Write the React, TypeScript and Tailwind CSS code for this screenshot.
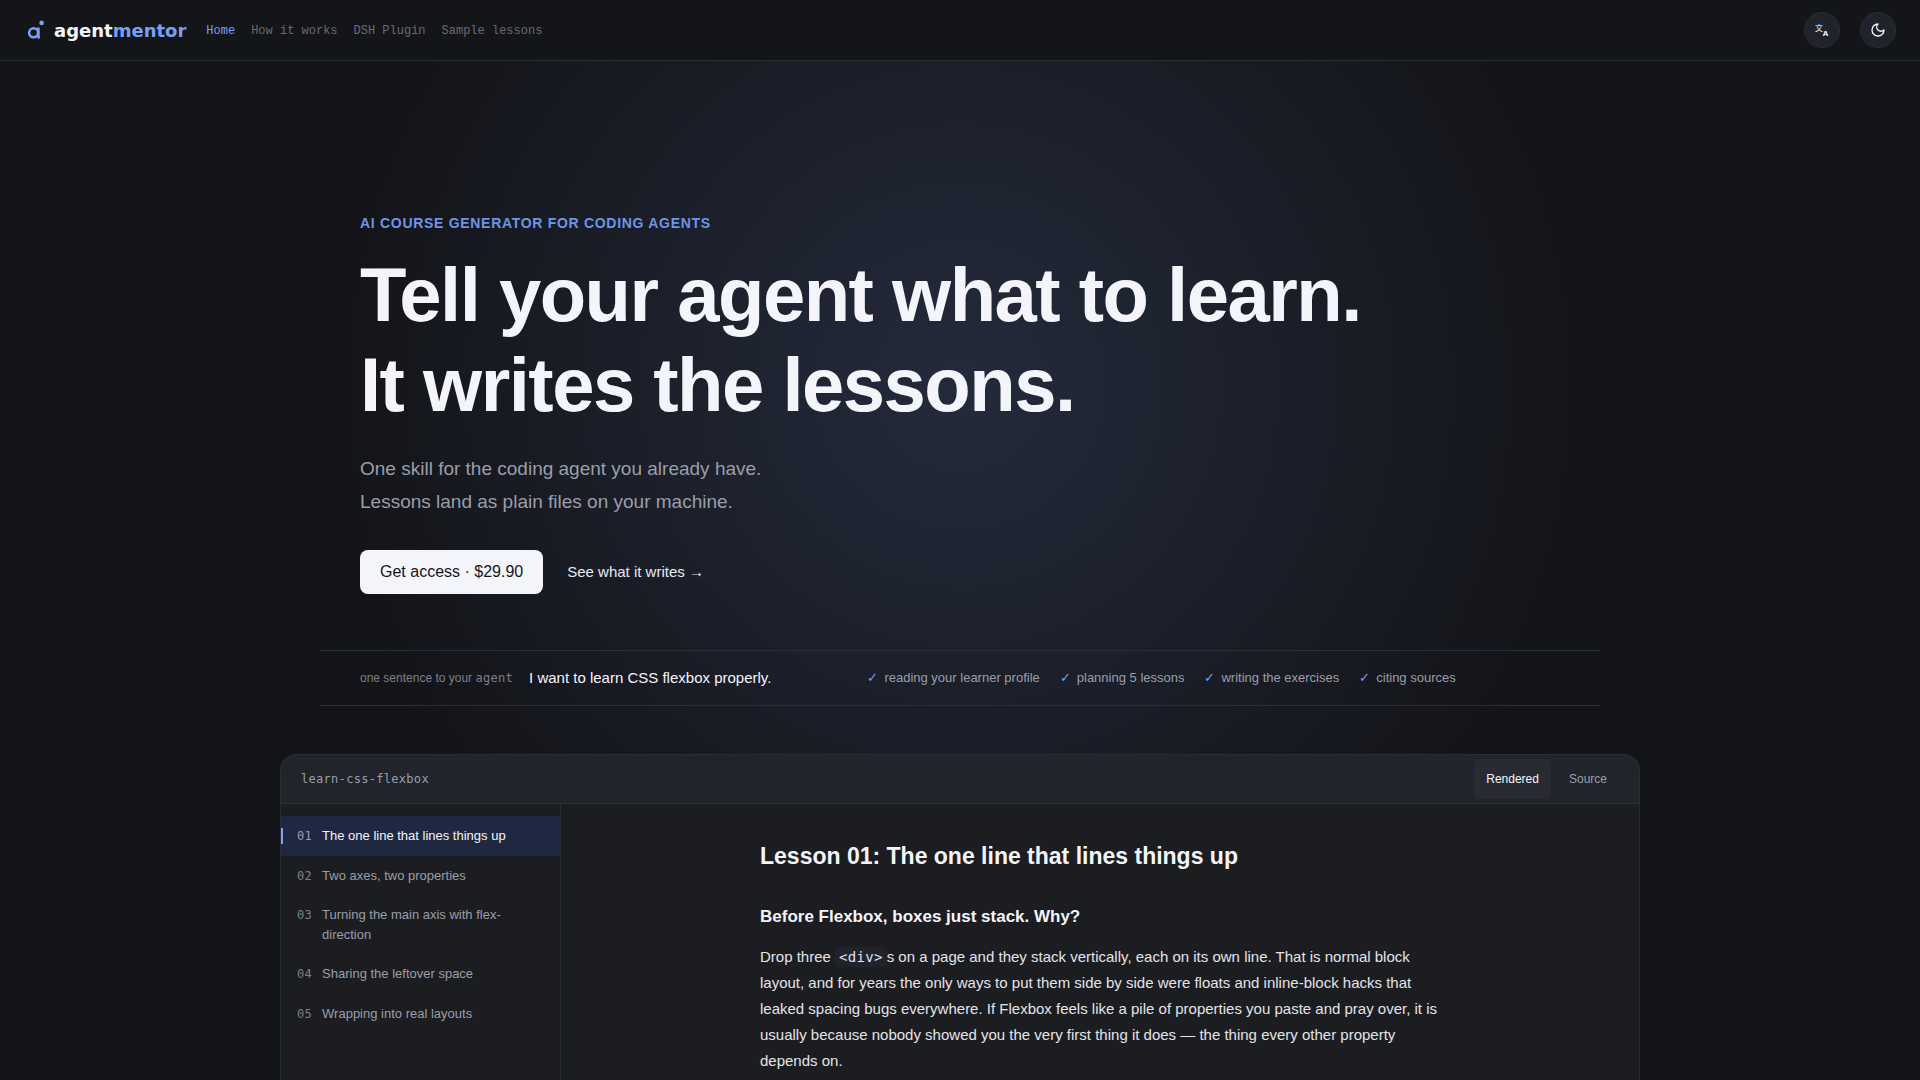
import { useState } from 'react';

const navLinks = ['Home', 'How it works', 'DSH Plugin', 'Sample lessons'];

const steps = ['reading your learner profile', 'planning 5 lessons', 'writing the exercises', 'citing sources'];

const lessons = [
  'The one line that lines things up',
  'Two axes, two properties',
  'Turning the main axis with flex-direction',
  'Sharing the leftover space',
  'Wrapping into real layouts',
];

function LogoMark() {
  return (
    <svg viewBox="0 0 20 20" className="size-5" fill="none" stroke="#7a9ff5" aria-hidden="true">
      <circle cx="9.6" cy="12.8" r="4.5" strokeWidth="2.6" />
      <path d="M14.4 7.4V16c0 1 .3 1.700 1 2.400" strokeWidth="2.600" />
      <circle cx="17.6" cy="2.9" r="2.3" fill="#7a9ff5" stroke="none" />
    </svg>
  );
}

function TranslateIcon() {
  return (
    <svg viewBox="0 0 16 16" className="size-4" fill="currentColor" aria-hidden="true">
      <text x="1" y="8.5" fontSize="8" fontFamily="Noto Sans CJK SC, sans-serif">文</text>
      <text x="8.8" y="14.4" fontSize="7" fontWeight="700" fontFamily="DejaVu Sans, sans-serif">A</text>
    </svg>
  );
}

function MoonIcon() {
  return (
    <svg viewBox="0 0 24 24" className="size-4" fill="none" stroke="currentColor" strokeWidth="2" strokeLinecap="round" strokeLinejoin="round" aria-hidden="true">
      <path d="M12 3a6 6 0 0 0 9 9 9 9 0 1 1-9-9Z" />
    </svg>
  );
}

function Header() {
  return (
    <header className="flex h-[61px] items-center border-b border-[#2a2d33] bg-[#141519] px-6">
      <a href="#" className="flex items-center gap-2.5 font-['DejaVu_Sans',sans-serif] text-[18px] font-bold text-[#f4f5fa]">
        <LogoMark />
        <span>
          agent<span className="text-[#7a9ff5]">mentor</span>
        </span>
      </a>
      <nav className="ml-5 flex gap-4 pt-0.5 font-['Liberation_Mono',monospace] text-xs">
        {navLinks.map((label, i) => (
          <a key={label} href="#" className={i === 0 ? 'text-[#7a9ff5]' : 'text-[#666b76]'}>
            {label}
          </a>
        ))}
      </nav>
      <div className="ml-auto flex gap-5 text-[#f4f5fa]">
        <button type="button" aria-label="Change language" className="flex size-9 items-center justify-center rounded-full border border-[#2a2d33] bg-[#20232b]">
          <TranslateIcon />
        </button>
        <button type="button" aria-label="Toggle theme" className="flex size-9 items-center justify-center rounded-full border border-[#2a2d33] bg-[#20232b]">
          <MoonIcon />
        </button>
      </div>
    </header>
  );
}

function Hero() {
  return (
    <section className="mx-auto max-w-[1280px] px-10 pt-[151px]">
      <p className="text-sm leading-[22px] font-bold tracking-[0.7px] text-[#6f94e6]">AI COURSE GENERATOR FOR CODING AGENTS</p>
      <h1 className="mt-4 text-[76px] leading-[90px] font-bold tracking-[-1.5px] text-[#f4f5fa]">
        Tell your agent what to learn.
        <br />
        It writes the lessons.
      </h1>
      <p className="mt-[22px] text-[19px] leading-[33px] text-[#9a9ea9]">
        One skill for the coding agent you already have.
        <br />
        Lessons land as plain files on your machine.
      </p>
      <div className="mt-8 flex items-center gap-6">
        <a href="#" className="rounded-lg bg-[#f4f5fa] px-5 py-[10px] text-base text-[#141519]">
          Get access · $29.90
        </a>
        <a href="#" className="text-[15px] text-[#e8eaf0]">
          See what it writes →
        </a>
      </div>
    </section>
  );
}

function PromptStrip() {
  return (
    <div className="mx-auto mt-14 flex h-14 max-w-[1280px] items-center border-y border-[#2a2e37] px-10">
      <span className="text-xs text-[#7b808c]">
        one sentence to your <span className="font-['DejaVu_Sans_Mono',monospace] tracking-[0.3px]">agent</span>
      </span>
      <span className="ml-4 text-[15px] text-[#f4f5fa]">I want to learn CSS flexbox properly.</span>
      <ul className="ml-24 flex gap-5 text-[13px] text-[#9a9ea9]">
        {steps.map((step) => (
          <li key={step} className="flex gap-1.5">
            <span className="text-[#7a9ff5]">✓</span>
            {step}
          </li>
        ))}
      </ul>
    </div>
  );
}

function LessonViewer() {
  const [active, setActive] = useState(0);
  const [view, setView] = useState('Rendered');

  return (
    <section className="mx-auto mt-12 w-full max-w-[1360px] overflow-hidden rounded-t-2xl border border-b-0 border-[#2a2e34] bg-[#1c1d21]">
      <div className="flex h-[49px] items-center justify-between border-b border-[#2a2e34] bg-[#21242b] px-5">
        <span className="font-['DejaVu_Sans_Mono',monospace] text-xs tracking-[0.3px] text-[#9a9ea9]">learn-css-flexbox</span>
        <div className="flex gap-1.5">
          {['Rendered', 'Source'].map((label) => (
            <button
              key={label}
              type="button"
              onClick={() => setView(label)}
              className={`h-10 rounded-md px-3 text-xs ${view === label ? 'bg-[#282b32] text-[#f4f5fa]' : 'text-[#9a9ea9]'}`}
            >
              {label}
            </button>
          ))}
        </div>
      </div>
      <div className="flex min-h-[480px]">
        <ol className="w-[280px] shrink-0 border-r border-[#2a2e34] py-3">
          {lessons.map((title, i) => (
            <li key={title}>
              <button
                type="button"
                onClick={() => setActive(i)}
                className={`relative flex w-full items-baseline gap-2.5 px-4 py-[10px] text-left text-[13px] leading-normal ${active === i ? 'bg-[#1f2840] text-[#f4f5fa]' : 'text-[#9a9ea9]'}`}
              >
                {active === i && <span className="absolute top-3 left-0 h-4 w-0.5 bg-[#7a9ff5]" />}
                <span className={`font-['DejaVu_Sans_Mono',monospace] text-xs leading-none tracking-[0.3px] ${active === i ? 'text-[#9a9ea9]' : 'text-[#7b808c]'}`}>0{i + 1}</span>
                <span className="max-w-[200px]">{title}</span>
              </button>
            </li>
          ))}
        </ol>
        <article className="mx-auto w-full max-w-[680px] pt-[35px] text-[#e2e4ea]">
          <h2 className="text-[23px] leading-[34px] font-bold text-[#f4f5fa]">Lesson 01: The one line that lines things up</h2>
          <h3 className="mt-[31px] text-[17px] leading-[26px] font-bold text-[#f4f5fa]">Before Flexbox, boxes just stack. Why?</h3>
          <p className="mt-3.5 text-[15px] leading-[26px]">
            Drop three <code className="rounded bg-[#20232b] px-1 py-0.5 font-['DejaVu_Sans_Mono',monospace] text-sm tracking-[0.3px]">&lt;div&gt;</code>s on a page and they stack vertically, each on its own line. That is
            normal block layout, and for years the only ways to put them side by side were floats and inline-block hacks that leaked spacing bugs everywhere. If Flexbox feels like a pile of properties you paste and pray over,
            it is usually because nobody showed you the very first thing it does — the thing every other property depends on.
          </p>
        </article>
      </div>
    </section>
  );
}

export default function App() {
  return (
    <div className="h-screen overflow-hidden bg-[#131418] font-['Liberation_Sans',Arial,sans-serif]">
      <Header />
      <main className="bg-[radial-gradient(circle_at_50%_324px,#232a3b_0px,#131418_640px)]">
        <Hero />
        <PromptStrip />
        <LessonViewer />
      </main>
    </div>
  );
}
